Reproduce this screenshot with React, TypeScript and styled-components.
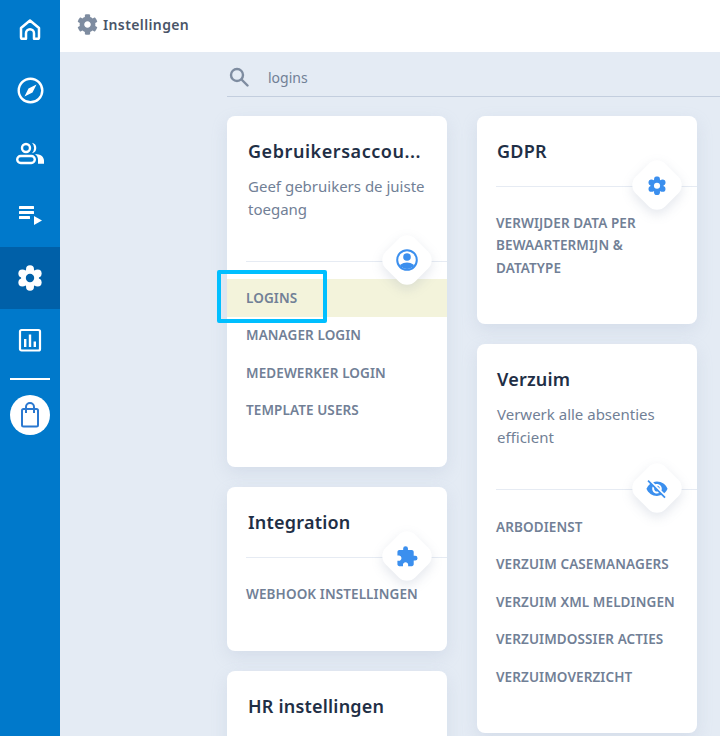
import React from "react";
import styled, { createGlobalStyle } from "styled-components";
import { MdVisibilityOff, MdExtension } from "react-icons/md";
import { FaCog } from "react-icons/fa";

const Global = createGlobalStyle`
  html, body { margin: 0; padding: 0; height: 736px; overflow: hidden; background: #e4ebf4; }
  * { box-sizing: border-box; }
  #root { height: 736px; }
`;
const Page = styled.div`
  display: flex; width: 720px; height: 736px; overflow: hidden; background: #e4ebf4;
  font-family: "Noto Sans", "Open Sans", sans-serif;
`;
const Sidebar = styled.nav`
  width: 60px; flex: none; background: #0079cb; display: flex; flex-direction: column; align-items: center;
`;
const NavItem = styled.div<{ $active?: boolean; $first?: boolean }>`
  width: 60px; height: ${p => (p.$first ? 59 : 62.5)}px; flex: none; display: flex; align-items: center; justify-content: center;
  color: #fff; background: ${p => (p.$active ? "#0060a8" : "transparent")};
`;
const NavRule = styled.div`
  width: 40px; height: 2px; background: #fff; margin: 6.5px 0 14.5px; flex: none;
`;
const BagCircle = styled.div`
  width: 40px; height: 40px; border-radius: 50%; background: #fff; color: #2a78d0;
  display: flex; align-items: center; justify-content: center;
`;
const Content = styled.div`
  flex: 1; min-width: 0; display: flex; flex-direction: column;
`;
const Header = styled.header`
  height: 52px; flex: none; background: #fff; display: flex; align-items: center; gap: 5px; padding: 0 0 4px 17px;
  color: #7e8ca0;
`;
const HeaderTitle = styled.span`
  font-size: 14px; font-weight: 600; color: #4a5568; letter-spacing: 0.38px;
`;
const Body = styled.main`
  flex: 1; min-height: 0; padding-left: 167px; overflow: hidden;
`;
const SearchBar = styled.div`
  height: 45px; border-bottom: 1px solid #c3cede; display: flex; align-items: center; gap: 19px; padding: 6px 0 0 2px;
  color: #7e8ca0;
`;
const SearchText = styled.span`
  font-family: "Noto Sans", sans-serif; font-size: 14px; color: #718096;
`;
const Columns = styled.div`
  display: flex; gap: 30px; padding-top: 19px; align-items: flex-start;
`;
const Column = styled.div`
  width: 220px; display: flex; flex-direction: column; gap: 20px; flex: none;
`;
const Card = styled.section<{ $h: number }>`
  position: relative; height: ${p => p.$h}px; background: #fff; border-radius: 8px; flex: none;
  box-shadow: 0 6px 16px rgba(160, 175, 200, 0.22);
`;
const CardHead = styled.div<{ $h: number }>`
  height: ${p => p.$h}px; padding-top: 22px; position: relative; border-bottom: 1px solid #e6ebf3; margin-left: 19px;
`;
const Title = styled.h2<{ $inset?: number; $spacing?: number }>`
  margin: 0 0 0 ${p => p.$inset ?? 1}px; font-size: 18px; line-height: 26px; font-weight: 600; color: #1f2f46; white-space: nowrap;
  letter-spacing: ${p => p.$spacing ?? 0.2}px;
`;
const Desc = styled.p<{ $inset?: number }>`
  margin: 11px 0 0 ${p => p.$inset ?? 1}px; font-family: "Noto Sans", sans-serif; font-size: 15px; line-height: 23px; color: #718096; width: 185px;
`;
const Diamond = styled.div`
  position: absolute; right: 19px; bottom: -20px; width: 42px; height: 42px; transform: rotate(45deg);
  border-radius: 12px; background: #fff; box-shadow: 3px 3px 12px rgba(120, 135, 165, 0.2);
  display: flex; align-items: center; justify-content: center; color: #3b8fee;
  & > svg { transform: rotate(-45deg); }
`;
const Links = styled.ul<{ $top: number }>`
  list-style: none; margin: 0; padding: ${p => p.$top}px 0 0;
`;
const LinkRow = styled.li<{ $on?: boolean }>`
  padding: 7.5px 19px; min-height: 37.5px; font-size: 13.5px; line-height: 22.5px; font-weight: 600; color: #718096;
  background: ${p => (p.$on ? "#f3f3db" : "transparent")};
  letter-spacing: 0.1px; white-space: nowrap;
`;
const Wrap = styled.span`
  display: block; white-space: normal; width: 180px;
`;
const Marker = styled.div`
  position: absolute; left: 217px; top: 270px; width: 110px; height: 53px; border: 4px solid #00bfff; border-radius: 2px; pointer-events: none;
`;

const Home = () => (
  <svg width="24" height="24" viewBox="0 0 24 24" fill="none" stroke="currentColor" strokeWidth="2.5" strokeLinejoin="round" strokeLinecap="round">
    <path d="M3 10 12 2.5l9 7.500v9.200a1.600 1.600 0 0 1-1.600 1.600H16v-5.600a4 4 0 0 0-8 0v5.600H4.600a1.600 1.600 0 0 1-1.600-1.600z" />
  </svg>
);
const CompassIcon = () => (
  <svg width="27" height="27" viewBox="0 0 27 27">
    <circle cx="13.500" cy="13.500" r="11.800" fill="none" stroke="currentColor" strokeWidth="2.400" />
    <path d="M19.500 7.500 15.500 15.500 7.500 19.500 11.500 11.500z" fill="currentColor" />
  </svg>
);
const People = () => (
  <svg width="30" height="24" viewBox="0 0 30 24" fill="none">
    <circle cx="11" cy="7" r="4" stroke="currentColor" strokeWidth="2.400" />
    <rect x="2.200" y="15" width="17.600" height="7" rx="3.500" stroke="currentColor" strokeWidth="2.400" />
    <path d="M17 1.800a5.300 5.300 0 0 1 0 10.400 7.500 7.500 0 0 0 0-10.400z" fill="currentColor" />
    <path d="M20 13c5.500 0 9 2.800 9 6.500v3.300h-6v-4c0-2.300-1-4.300-3-5.800z" fill="currentColor" />
  </svg>
);
const Queue = () => (
  <svg width="24" height="22" viewBox="-1 -2 24 22" fill="currentColor">
    <rect x="0" y="0" width="15" height="3" rx="0.500" />
    <rect x="0" y="5" width="15" height="3" rx="0.500" />
    <rect x="0" y="10" width="11" height="3" rx="0.500" />
    <path d="M15 10 23 14.500 15 19z" />
  </svg>
);
const Flower = ({ size, hole }: { size: number; hole: string }) => (
  <svg width={size} height={size} viewBox="0 0 26 26" fill="currentColor">
    <circle cx="13" cy="13" r="9" />
    {[30, 90, 150, 210, 270, 330].map(a => (
      <circle key={a} cx={13 + 8.800 * Math.cos((a * Math.PI) / 180)} cy={13 + 8.800 * Math.sin((a * Math.PI) / 180)} r="4" />
    ))}
    <circle cx="13" cy="13" r="4.200" fill={hole} />
  </svg>
);
const Chart = () => (
  <svg width="24" height="24" viewBox="0 0 24 24">
    <rect x="2" y="2" width="20" height="20.500" rx="1.500" fill="none" stroke="currentColor" strokeWidth="2.200" />
    <rect x="6" y="11" width="2.400" height="8" fill="currentColor" />
    <rect x="10.800" y="6.500" width="2.400" height="12.500" fill="currentColor" />
    <rect x="15.600" y="13.500" width="2.400" height="5.500" fill="currentColor" />
  </svg>
);
const Bag = () => (
  <svg width="20" height="26" viewBox="0 0 20 26" fill="none" stroke="currentColor" strokeWidth="2">
    <rect x="2" y="7" width="16" height="17.500" rx="1.500" />
    <path d="M6 11V5a4 4 0 0 1 8 0v6" />
  </svg>
);
const Person = () => (
  <svg width="22" height="22" viewBox="0 0 22 22">
    <defs>
      <clipPath id="person-disc"><circle cx="11" cy="11" r="9" /></clipPath>
    </defs>
    <circle cx="11" cy="11" r="9.800" fill="none" stroke="currentColor" strokeWidth="2" />
    <circle cx="11" cy="8" r="3.800" fill="currentColor" />
    <ellipse cx="11" cy="20" rx="9" ry="6.500" fill="currentColor" clipPath="url(#person-disc)" />
  </svg>
);
const Lens = () => (
  <svg width="20" height="20" viewBox="0 0 20 20" fill="none" stroke="currentColor" strokeWidth="2.400">
    <circle cx="8" cy="8" r="6" />
    <path d="M12.500 12.500 18.500 18.500" strokeLinecap="round" />
  </svg>
);

export default function App() {
  return (
    <Page>
      <Global />
      <Sidebar>
        <NavItem $first><Home /></NavItem>
        <NavItem><CompassIcon /></NavItem>
        <NavItem><People /></NavItem>
        <NavItem><Queue /></NavItem>
        <NavItem $active><Flower size={26} hole="#0060a8" /></NavItem>
        <NavItem><Chart /></NavItem>
        <NavRule />
        <BagCircle><Bag /></BagCircle>
      </Sidebar>
      <Content>
        <Header>
          <FaCog size={21} />
          <HeaderTitle>Instellingen</HeaderTitle>
        </Header>
        <Body>
          <SearchBar>
            <Lens />
            <SearchText>logins</SearchText>
          </SearchBar>
          <Columns>
            <Column>
              <Card $h={351}>
                <CardHead $h={146}>
                  <Title $inset={2} $spacing={0.55}>Gebruikersaccou...</Title>
                  <Desc $inset={2}>Geef gebruikers de juiste toegang</Desc>
                  <Diamond><Person /></Diamond>
                </CardHead>
                <Links $top={17}>
                  <LinkRow $on>LOGINS</LinkRow>
                  <LinkRow>MANAGER LOGIN</LinkRow>
                  <LinkRow>MEDEWERKER LOGIN</LinkRow>
                  <LinkRow>TEMPLATE USERS</LinkRow>
                </Links>
              </Card>
              <Card $h={164}>
                <CardHead $h={71}>
                  <Title $inset={2}>Integration</Title>
                  <Diamond><MdExtension size={23} /></Diamond>
                </CardHead>
                <Links $top={17}>
                  <LinkRow>WEBHOOK INSTELLINGEN</LinkRow>
                </Links>
              </Card>
              <Card $h={120}>
                <CardHead $h={71}>
                  <Title $inset={2}>HR instellingen</Title>
                </CardHead>
              </Card>
            </Column>
            <Column>
              <Card $h={208}>
                <CardHead $h={71}>
                  <Title>GDPR</Title>
                  <Diamond><Flower size={19} hole="#fff" /></Diamond>
                </CardHead>
                <Links $top={17}>
                  <LinkRow><Wrap>VERWIJDER DATA PER BEWAARTERMIJN &amp; DATATYPE</Wrap></LinkRow>
                </Links>
              </Card>
              <Card $h={389}>
                <CardHead $h={146}>
                  <Title>Verzuim</Title>
                  <Desc>Verwerk alle absenties efficient</Desc>
                  <Diamond><MdVisibilityOff size={23} /></Diamond>
                </CardHead>
                <Links $top={18}>
                  <LinkRow>ARBODIENST</LinkRow>
                  <LinkRow>VERZUIM CASEMANAGERS</LinkRow>
                  <LinkRow>VERZUIM XML MELDINGEN</LinkRow>
                  <LinkRow>VERZUIMDOSSIER ACTIES</LinkRow>
                  <LinkRow>VERZUIMOVERZICHT</LinkRow>
                </Links>
              </Card>
            </Column>
          </Columns>
        </Body>
      </Content>
      <Marker />
    </Page>
  );
}
